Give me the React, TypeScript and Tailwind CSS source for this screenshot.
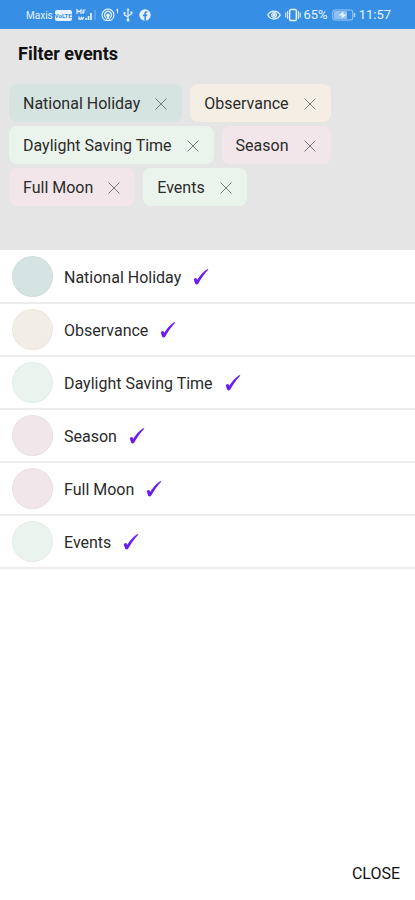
import { useState } from "react";

const CATEGORIES = [
  { id: "national", label: "National Holiday", chip: "bg-[#d5e4e1]", dot: "bg-[#d5e4e3]" },
  { id: "observance", label: "Observance", chip: "bg-[#f4eee5]", dot: "bg-[#f3ede7]" },
  { id: "dst", label: "Daylight Saving Time", chip: "bg-[#ebf4ec]", dot: "bg-[#ebf3ee]" },
  { id: "season", label: "Season", chip: "bg-[#f2e6ea]", dot: "bg-[#f1e7eb]" },
  { id: "moon", label: "Full Moon", chip: "bg-[#f2e6ea]", dot: "bg-[#f1e7eb]" },
  { id: "events", label: "Events", chip: "bg-[#ebf4ec]", dot: "bg-[#ebf3ee]" },
];

const SignalIcon = () => (
  <svg width="20" height="14" viewBox="0 0 20 14" fill="none" stroke="currentColor">
    <path d="M1 6V2l2 2 2-2v4M7 2v4M7 2h2.500M7 4h2" strokeWidth="1.200" />
    <path d="M3 8.500v2.500h3M5 9l1.500 2L8 9" strokeWidth="1.300" />
    <path d="M10 12v-2M12.500 12V8M15 12V5" strokeWidth="1.700" />
    <path d="M19 12V2" strokeWidth="1" opacity="0.4" />
  </svg>
);

const HotspotIcon = () => (
  <svg width="18" height="14" viewBox="0 0 18 14" fill="none" stroke="currentColor" strokeWidth="1.200" strokeLinecap="round">
    <path d="M3.500 12A6 6 0 1 1 10.500 12" />
    <path d="M4.600 9.500a3.500 3.500 0 1 1 4.800 0" />
    <circle cx="7" cy="7.200" r="1.200" fill="currentColor" />
    <path d="M7 9l-2 3.500h4z" />
    <path d="M15.500 2l1-1v4" strokeWidth="1" />
  </svg>
);

const UsbIcon = () => (
  <svg width="10" height="14" viewBox="0 0 10 14" fill="none" stroke="currentColor" strokeWidth="1.200">
    <path d="M5 2v9M5 9L1.500 7V5M5 8l3.500-2V4" />
    <path d="M5 0l1.500 2.500h-3z" fill="currentColor" stroke="none" />
    <circle cx="5" cy="12" r="1.500" fill="currentColor" stroke="none" />
    <path d="M.5 4h2v2h-2zM7.500 3.500h2v2h-2z" fill="currentColor" stroke="none" />
  </svg>
);

const FacebookIcon = () => (
  <svg width="12" height="12" viewBox="0 0 12 12">
    <circle cx="6" cy="6" r="5.700" fill="currentColor" />
    <path d="M5.300 11.700V7.300H3.900V5.600h1.400V4.500c0-1.500.8-2.200 2.100-2.200h1v1.500h-.7c-.6 0-.8.300-.8.800v1h1.500l-.3 1.700H6.900v4.400z" fill="#378fe5" />
  </svg>
);

const EyeIcon = () => (
  <svg width="14" height="12" viewBox="0 0 14 12" fill="none" stroke="currentColor" strokeWidth="1.300">
    <path d="M.8 6C3.500.7 10.500.7 13.200 6 10.500 11.300 3.500 11.300.8 6z" />
    <circle cx="7" cy="6" r="2.300" />
    <circle cx="7" cy="6" r=".8" fill="currentColor" />
  </svg>
);

const VibrateIcon = () => (
  <svg width="16" height="14" viewBox="0 0 16 14" fill="none" stroke="currentColor" strokeWidth="1.400">
    <rect x="4.700" y="1.500" width="6.600" height="11" rx="1" />
    <path d="M2.700 3v8M13.300 3v8M.8 4.500v5M15.200 4.500v5" strokeWidth="1.100" />
  </svg>
);

const BatteryIcon = () => (
  <svg width="24" height="12" viewBox="0 0 24 12" fill="none">
    <rect x=".8" y="1" width="20" height="10" rx="2" stroke="currentColor" strokeOpacity="0.6" />
    <rect x="2" y="2" width="13" height="8" rx="1" fill="currentColor" fillOpacity="0.5" />
    <path d="M11.500 2.500L6.500 6.500h3.500l-.5 3 5.500-4h-3.500z" fill="currentColor" />
    <path d="M22.500 4v4" stroke="currentColor" strokeWidth="1.500" strokeOpacity="0.700" />
  </svg>
);

const StatusBar = () => (
  <div className="flex h-[29px] items-center justify-between bg-[#378fe5] pt-px pr-6 pl-[26px] text-[#e6f2ff]">
    <div className="flex items-center">
      <span className="text-[10px]">Maxis</span>
      <span className="ml-0.5 flex h-[11px] w-[17px] items-center justify-center rounded-[2px] bg-[#e6f2ff] text-[6px] font-bold text-[#378fe5]">
        VoLTE
      </span>
      <span className="ml-1"><SignalIcon /></span>
      <span className="ml-[5px]"><HotspotIcon /></span>
      <span className="ml-1"><UsbIcon /></span>
      <span className="ml-1.5"><FacebookIcon /></span>
    </div>
    <div className="flex items-center text-[13px]">
      <EyeIcon />
      <span className="ml-1"><VibrateIcon /></span>
      <span className="ml-0.5">65%</span>
      <span className="ml-1"><BatteryIcon /></span>
      <span className="ml-[3px]">11:57</span>
    </div>
  </div>
);

const CrossIcon = () => (
  <svg width="14" height="14" viewBox="0 0 14 14" fill="none" stroke="#777b79" strokeWidth="1">
    <path d="M1.500 1.500l11 11M12.500 1.500l-11 11" />
  </svg>
);

const TickIcon = () => (
  <svg width="16" height="18" viewBox="0 0 16 18" fill="#6a1cf0" className="hidden peer-checked:block">
    <path d="M.8 11.300c0-.8 1.900-1.800 2.500-1.200.4.400.5 1.200.7 2C6.500 8.200 9.800 4 13.700 1.500c.5-.3 1.500-.2 1.700 0C11.400 5.500 8 10.500 5.100 15.800c-.3.700-2.400.9-2.700.2C1.700 14.600 1.200 12.800.8 11.300z" />
  </svg>
);

export default function App() {
  const [selected, setSelected] = useState(CATEGORIES.map((c) => c.id));

  const toggle = (id: string) =>
    setSelected((prev) => (prev.includes(id) ? prev.filter((s) => s !== id) : [...prev, id]));

  return (
    <div className="flex min-h-screen flex-col bg-white font-[Roboto,sans-serif] text-[#2b2b2b]">
      <StatusBar />

      <header className="min-h-[221px] bg-[#e5e5e5] px-[9px] pt-[13px]">
        <h1 className="px-[9px] text-lg leading-6 font-bold text-[#111111]">Filter events</h1>
        <div className="mt-[18px] flex flex-wrap gap-x-2 gap-y-1">
          {CATEGORIES.filter((c) => selected.includes(c.id)).map((c) => (
            <div key={c.id} className={`flex h-[38px] items-center rounded-lg px-3.5 pt-px ${c.chip}`}>
              <span className="text-base">{c.label}</span>
              <button type="button" className="ml-3.5" aria-label={`Remove ${c.label}`} onClick={() => toggle(c.id)}>
                <CrossIcon />
              </button>
            </div>
          ))}
        </div>
      </header>

      <main className="flex-1 pt-px">
        <ul>
          {CATEGORIES.map((c) => (
            <li key={c.id} className="border-b-2 border-[#ededed]">
              <label className="relative flex h-[51px] items-center pl-3">
                <input
                  type="checkbox"
                  className="peer sr-only"
                  checked={selected.includes(c.id)}
                  onChange={() => toggle(c.id)}
                />
                <span className={`size-[41px] rounded-full border border-black/3 ${c.dot}`} />
                <span className="mr-3 ml-[11px] pt-0.5 text-base">{c.label}</span>
                <TickIcon />
              </label>
            </li>
          ))}
        </ul>
      </main>

      <footer className="flex justify-end px-[15px] pb-3.5">
        <button type="button" className="text-base text-[#111111]">CLOSE</button>
      </footer>
    </div>
  );
}
